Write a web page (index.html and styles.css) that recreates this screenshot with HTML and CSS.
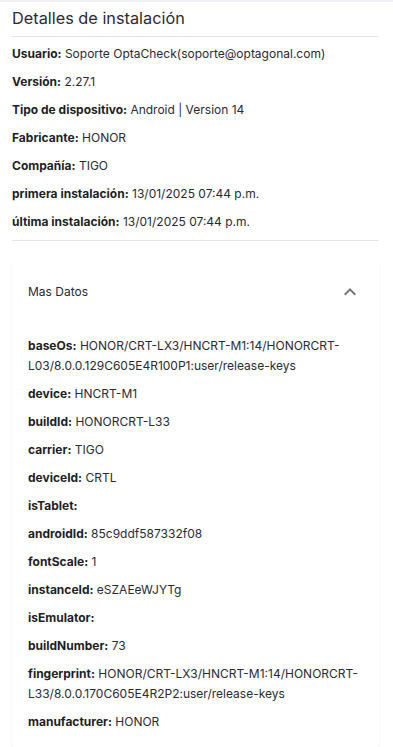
FILE: index.html
```html
<!DOCTYPE html>
<html lang="es">
<head>
<meta charset="utf-8">
<link rel="stylesheet" href="styles.css">
</head>
<body>
<div class="page">
  <h2 class="title">Detalles de instalación</h2>
  <div class="info">
    <p class="row"><b>Usuario:</b> Soporte OptaCheck(soporte@optagonal.com)</p>
    <p class="row"><b>Versión:</b> 2.27.1</p>
    <p class="row"><b>Tipo de dispositivo:</b> Android | Version 14</p>
    <p class="row"><b>Fabricante:</b> HONOR</p>
    <p class="row"><b>Compañía:</b> TIGO</p>
    <p class="row"><b>primera instalación:</b> 13/01/2025 07:44 p.m.</p>
    <p class="row"><b>última instalación:</b> 13/01/2025 07:44 p.m.</p>
  </div>
  <div class="card">
    <div class="summary">
      <span>Mas Datos</span>
      <svg class="chev" width="24" height="24" viewBox="0 0 24 24"><path d="M7.41 15.41 12 10.83l4.59 4.58L18 14l-6-6-6 6z" fill="#757575"/></svg>
    </div>
    <div class="details">
      <p class="row"><b>baseOs:</b> HONOR/CRT-LX3/HNCRT-M1:14/HONORCRT-L03/8.0.0.129C605E4R100P1:user/release-keys</p>
      <p class="row"><b>device:</b> HNCRT-M1</p>
      <p class="row"><b>buildId:</b> HONORCRT-L33</p>
      <p class="row"><b>carrier:</b> TIGO</p>
      <p class="row"><b>deviceId:</b> CRTL</p>
      <p class="row"><b>isTablet:</b> </p>
      <p class="row"><b>androidId:</b> 85c9ddf587332f08</p>
      <p class="row"><b>fontScale:</b> 1</p>
      <p class="row"><b>instanceId:</b> eSZAEeWJYTg</p>
      <p class="row"><b>isEmulator:</b> </p>
      <p class="row"><b>buildNumber:</b> 73</p>
      <p class="row"><b>fingerprint:</b> HONOR/CRT-LX3/HNCRT-M1:14/HONORCRT-L33/8.0.0.170C605E4R2P2:user/release-keys</p>
      <p class="row"><b>manufacturer:</b> HONOR</p>
    </div>
  </div>
</div>
</body>
</html>
```
FILE: styles.css
```css
html, body {
  margin: 0;
  padding: 0;
  background: #fff;
}
body {
  font-family: Inter, "Noto Sans", sans-serif;
  color: #2a2a33;
  border-top: 2px solid #eef0f5;
}
.page {
  padding: 0 14px 0 12px;
}
.title {
  margin: 0;
  padding: 6px 0 8px;
  font-size: 16.3px;
  font-weight: 400;
  line-height: 20px;
  color: #2a2a33;
  border-bottom: 1px solid #e4e4ec;
}
.row {
  margin: 0;
  font-size: 12px;
  line-height: 20px;
  color: #2a2a33;
  overflow-wrap: anywhere;
}
.row b {
  font-weight: 700;
  color: #1e1e26;
}
.info {
  display: flex;
  flex-direction: column;
  gap: 8px;
  padding: 7px 0 8px;
  border-bottom: 1px solid #e4e4ec;
}
.card {
  margin-top: 19px;
  border-radius: 4px;
  box-shadow: 0 2px 1px -1px rgba(0,0,0,0.08), 0 1px 1px 0 rgba(0,0,0,0.05), 0 1px 3px 0 rgba(0,0,0,0.06);
  padding-bottom: 16px;
}
.summary {
  display: flex;
  align-items: center;
  justify-content: space-between;
  padding: 20px 17px 20px 16px;
  font-size: 12px;
  line-height: 24px;
}
.chev {
  display: block;
}
.details {
  display: flex;
  flex-direction: column;
  gap: 8px;
  padding: 12px 16px 0;
}
```
